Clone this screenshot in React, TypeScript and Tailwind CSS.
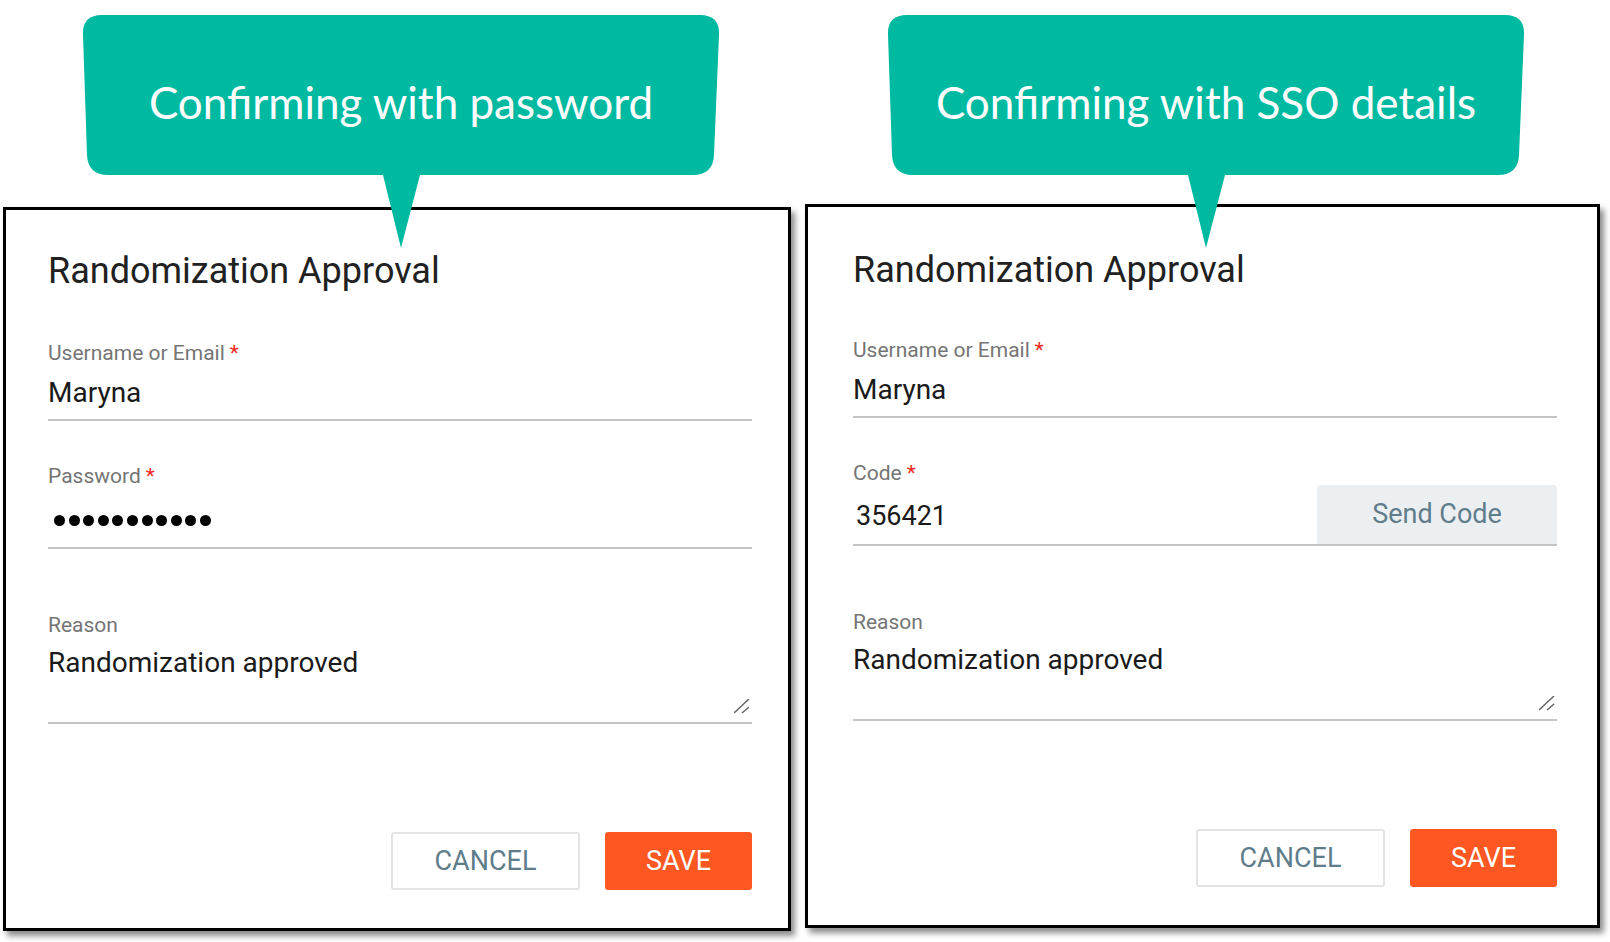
import React from "react";

const roboto = "font-['Roboto',sans-serif]";

function Bubble({ text, className }: { text: string; className: string }) {
  return (
    <div className={`relative z-10 h-[160px] w-[638px] ${className}`}>
      <svg
        className="absolute left-0 top-0 overflow-visible"
        width="638"
        height="233"
        viewBox="0 0 638 233"
      >
        <path
          d="M20 0 H618 Q638 0 637 20 L632 140 Q631 160 611 160 H338 L319 233 L301 160 H26 Q6 160 5 140 L1 20 Q0 0 20 0 Z"
          fill="#00b9a1"
        />
      </svg>
      <p className="relative pt-[65px] text-center font-['Lato',sans-serif] text-[44px] leading-none text-white">
        {text}
      </p>
    </div>
  );
}

function Label({ text, required }: { text: string; required?: boolean }) {
  return (
    <div className="text-[21px] leading-none text-[#757575]">
      {text}
      {required && <span className="ml-[5px] text-[#f02a1e]">*</span>}
    </div>
  );
}

function ResizeHandle() {
  return (
    <svg
      className="absolute bottom-[8px] right-[2px]"
      width="16"
      height="15"
      viewBox="0 0 16 15"
    >
      <path d="M15 0 L0 14 M15 8 L8 14" stroke="#666" strokeWidth="1.5" />
    </svg>
  );
}

function Panel({
  mode,
  className,
}: {
  mode: "password" | "code";
  className: string;
}) {
  const isCode = mode === "code";
  return (
    <div
      className={`border-[3px] border-black bg-white pb-[38px] shadow-[4px_5px_6px_rgba(0,0,0,0.45)] ${roboto} ${className}`}
    >
      <div className="w-[704px]">
        <h2
          className={`${isCode ? "pt-[45px]" : "pt-[43px]"} text-[36px] leading-none font-normal text-[#212121]`}
        >
          Randomization Approval
        </h2>

        <div className={isCode ? "mt-[52px]" : "mt-[54px]"}>
          <Label text="Username or Email" required />
          <div className="border-b-2 border-[#c4c4c4] pt-[15px] pb-[12px] text-[28px] leading-none text-[#1a1a1a]">
            Maryna
          </div>
        </div>

        {!isCode ? (
          <div className="mt-[45px]">
            <Label text="Password" required />
            <div className="flex h-[62px] gap-[3.6px] border-b-2 border-[#c4c4c4] pt-[28px] pl-[6px]">
              {Array.from({ length: 11 }).map((_, i) => (
                <span key={i} className="h-[11px] w-[11px] rounded-full bg-black" />
              ))}
            </div>
          </div>
        ) : (
          <div className="mt-[45px]">
            <Label text="Code" required />
            <div className="flex h-[62px] items-end justify-between border-b-2 border-[#c4c4c4]">
              <span className="self-start pt-[19px] pl-[3px] text-[27px] leading-none text-[#1a1a1a]">
                356421
              </span>
              <button className="flex h-[59px] w-[240px] items-center justify-center rounded-t-[4px] bg-[#eceff1] text-[27px] text-[#5f7d8b]">
                Send Code
              </button>
            </div>
          </div>
        )}

        <div className="mt-[66px]">
          <Label text="Reason" />
          <div className="relative h-[88px] border-b-2 border-[#c4c4c4] pt-[13px] text-[28px] leading-none text-[#1a1a1a]">
            Randomization approved
            <ResizeHandle />
          </div>
        </div>

        <div className="mt-[108px] flex justify-end gap-[25px]">
          <button className="h-[58px] w-[189px] rounded-[3px] border-2 border-[#e2e4e6] bg-white text-[27px] text-[#607d8b]">
            CANCEL
          </button>
          <button className="h-[58px] w-[147px] rounded-[3px] bg-[#ff5722] text-[27px] text-white">
            SAVE
          </button>
        </div>
      </div>
    </div>
  );
}

export default function App() {
  return (
    <div className="flex h-[942px] w-[1610px] items-start overflow-hidden bg-white">
      <div className="flex flex-col pt-[15px] pl-[3px]">
        <Bubble text="Confirming with password" className="ml-[79px]" />
        <Panel mode="password" className="mt-[32px] w-[788px] pl-[42px]" />
      </div>
      <div className="ml-[14px] flex flex-col pt-[15px]">
        <Bubble text="Confirming with SSO details" className="ml-[82px]" />
        <Panel mode="code" className="mt-[29px] w-[795px] pl-[45px]" />
      </div>
    </div>
  );
}
